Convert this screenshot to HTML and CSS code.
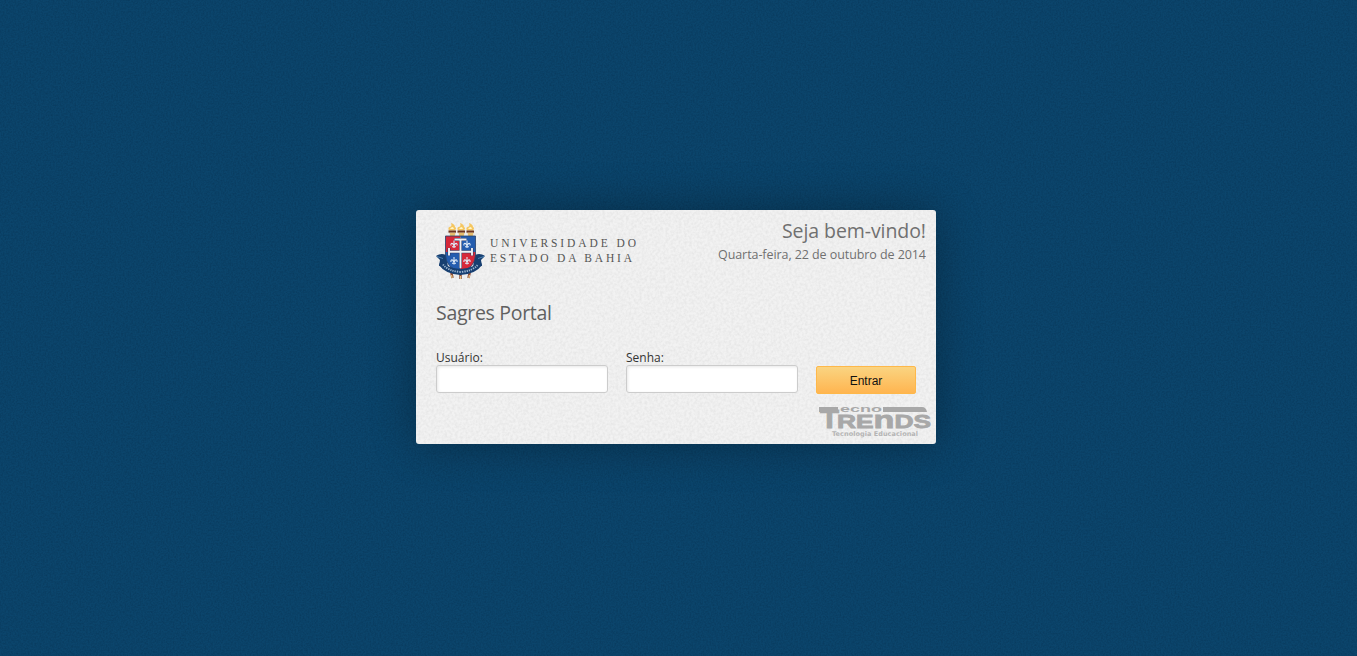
FILE: index.html
```html
<!DOCTYPE html>
<html lang="pt-BR">
<head>
<meta charset="utf-8">
<title>Sagres Portal</title>
<link rel="stylesheet" href="styles.css">
</head>
<body>
<svg class="texture" aria-hidden="true">
  <filter id="grain" x="0" y="0" width="100%" height="100%" color-interpolation-filters="sRGB">
    <feTurbulence type="fractalNoise" baseFrequency="0.6" numOctaves="2" seed="4"/>
    <feColorMatrix values="0 0 0 0 0  0 0 0 0 0.1  0 0 0 0 0.2  0.4 0 0 0 -0.13"/>
  </filter>
  <rect width="100%" height="100%" filter="url(#grain)"/>
</svg>
<main class="card">
  <svg class="texture card-texture" aria-hidden="true">
    <filter id="paper" x="0" y="0" width="100%" height="100%" color-interpolation-filters="sRGB">
      <feTurbulence type="fractalNoise" baseFrequency="0.38" numOctaves="2" seed="9"/>
      <feColorMatrix values="0 0 0 0 0.8  0 0 0 0 0.8  0 0 0 0 0.8  0.6 0 0 0 -0.2"/>
    </filter>
    <rect width="100%" height="100%" filter="url(#paper)"/>
  </svg>
  <header class="top">
    <div class="brand">
      <svg class="crest" viewBox="0 0 50 58" width="50" height="58">
        <!-- torches -->
        <g id="torch">
          <path d="M13 8.500Q11 5 15 4.500Q16 3 15 1Q19 2.500 19 5Q21 6 19 8.500Z" fill="#f5c660"/>
          <path d="M14 7Q15 5 17 5L18 7Z" fill="#fff6c8"/>
          <path d="M12.500 8.500h7.500v2.200h-7.500z" fill="#6f3520"/>
          <path d="M13.500 10.700h6l-1 4.500h-4z" fill="#e6bd6c"/>
        </g>
        <use href="#torch" x="9"/><use href="#torch" x="18"/>
        <!-- rods and ribbon ends behind the shield -->
        <path d="M15 49l1.500 7M24.500 50v7M34 49l-1.500 7" stroke="#8b4a35" stroke-width="2.500"/>
        <path d="M15.500 53l.7 3M24.500 54v3M33.500 53l-.7 3" stroke="#e9c986" stroke-width="1.200"/>
        <path d="M0 34Q5 30.500 10 33L12 45L3 44L4 38Z" fill="#173f70"/>
        <path d="M49 34Q44 30.500 39 33L37 45L46 44L45 38Z" fill="#173f70"/>
        <path d="M1 34.500l6 2M48 34.500l-6 2" stroke="#4f83b4"/>
        <!-- quartered shield -->
        <path d="M9.500 14H24.500V30H9.500Z" fill="#d6283a"/>
        <path d="M24.500 14H39.500V30H24.500Z" fill="#245daf"/>
        <path d="M9.500 30H24.500V50Q10 46 9.500 33Z" fill="#245daf"/>
        <path d="M24.500 30H39.500V33Q39 46 24.500 50Z" fill="#d6283a"/>
        <path d="M9.500 14H39.500V33Q39 46 24.500 50Q10 46 9.500 33Z" fill="none" stroke="#24416c" stroke-width=".8"/>
        <path d="M24.500 17V46M13 29.700H36M18.500 17.500H30.500M13 26V33.500M36 26V33.500" fill="none" stroke="#303b60" stroke-width="3"/>
        <path d="M24.500 17V46M13 29.700H36M18.500 17.500H30.500M13 26V33.500M36 26V33.500" fill="none" stroke="#eff1f5" stroke-width="1.900"/>
        <g fill="none" stroke="#dfebf8" stroke-width="1.100">
          <path id="lis" d="M18 18.500V26M15 23.500Q14.500 21 16.500 21.500L18 23.700L19.500 21.500Q21.500 21 21 23.500M16 24.700H20"/>
          <use href="#lis" x="13"/><use href="#lis" y="16.500"/><use href="#lis" x="13" y="16.500"/>
        </g>
        <!-- motto ribbon -->
        <path d="M5 38Q9 46 24.500 47Q40 46 44 38L46 43Q40 52 24.500 53Q9 52 3 43Z" fill="#173f71"/>
        <path d="M7 42.500Q12 49 24.500 50Q37 49 42 42.500" fill="none" stroke="#9fb7d0" stroke-width="1.900" stroke-dasharray="1.300 1"/>
      </svg>
      <svg class="brand-name" width="150" height="32" viewBox="0 0 150 32">
        <text x="1" y="10" textLength="146">UNIVERSIDADE DO</text>
        <text x="1" y="25" textLength="142">ESTADO DA BAHIA</text>
      </svg>
    </div>
    <div class="welcome">
      <svg width="220" height="50" viewBox="0 0 220 50">
        <text class="hello" x="76" y="21" textLength="144">Seja bem-vindo!</text>
        <text class="date" x="12" y="42" textLength="208">Quarta-feira, 22 de outubro de 2014</text>
      </svg>
    </div>
  </header>
  <h1 class="title">Sagres Portal</h1>
  <form class="login">
    <label class="field"><span class="label">Usuário:</span><input class="input" type="text"></label>
    <label class="field"><span class="label">Senha:</span><input class="input" type="password"></label>
    <button class="submit" type="button">Entrar</button>
  </form>
  <footer class="foot">
    <svg class="vendor" width="114" height="34" viewBox="0 0 114 34">
      <path d="M1 3H20V8H1ZM65 3H104Q108 3 109 8H65Z"/>
      <text class="mark" x="2" y="23.500" font-size="26" textLength="19" lengthAdjust="spacingAndGlyphs">T</text>
      <text class="mark" x="19" y="23.500" font-size="18.500" textLength="94" lengthAdjust="spacingAndGlyphs">RE<tspan font-size="24">n</tspan>DS</text>
      <text class="tecno" x="22" y="8" font-size="9.500" textLength="42" lengthAdjust="spacingAndGlyphs">ecno</text>
      <text class="tag" x="14" y="32" textLength="86">Tecnologia Educacional</text>
    </svg>
  </footer>
</main>
</body>
</html>
```
FILE: styles.css
```css
* { box-sizing: border-box; }
body {
  margin: 0;
  height: 656px;
  padding: 210px 0 0 416px;
  position: relative;
  overflow: hidden;
  background: #0b456c;
  font-family: "Noto Sans", "Open Sans", sans-serif;
}
.texture { position: absolute; top: 0; left: 0; width: 100%; height: 100%; }
.card {
  position: relative;
  width: 520px;
  height: 234px;
  padding: 10px 10px 0 20px;
  background: #f2f2f2;
  border-radius: 3px;
  box-shadow: 0 0 46px rgba(0, 0, 0, .32);
}
.card-texture { border-radius: 3px; }
.top, .title, .login, .foot { position: relative; }
.top { display: flex; justify-content: space-between; height: 77px; }
.brand { display: flex; gap: 4px; padding-top: 2px; }
.crest { display: block; }
.brand-name { margin: 15px 0 0 -1px; }
.brand-name text { font: 11.5px "Liberation Serif", serif; fill: #555; }
.hello, .date { font-family: "Open Sans", sans-serif; fill: #707070; }
.welcome { margin-top: -3px; }
.hello { font-size: 19.5px; }
.date { font-size: 12.5px; }
.title {
  margin: 0;
  height: 53px;
  font: 400 19.5px/32px "Open Sans", sans-serif;
  letter-spacing: -.3px;
  color: #606060;
}
.login { display: flex; align-items: flex-end; gap: 18px; height: 44px; }
.field { display: block; width: 172px; height: 44px; }
.label { display: block; height: 15px; font: 12px/15px "Open Sans", sans-serif; color: #333; }
.input {
  display: block;
  width: 172px;
  height: 28px;
  border: 1px solid #ccc;
  border-radius: 3px;
  background: #fff;
  box-shadow: inset 1px 1px 3px #e8e8e8;
}
.submit {
  width: 100px;
  height: 28px;
  padding: 1px 0 0;
  border: 1px solid #feb84a;
  border-radius: 2px;
  background: linear-gradient(#fad481, #ffb550);
  font: 12px "Liberation Sans", Arial, sans-serif;
  color: #111;
}
.foot { display: flex; justify-content: flex-end; padding-top: 10px; margin-right: -6px; }
.vendor { display: block; fill: #a8a8a8; }
.mark { font-family: "Liberation Sans", sans-serif; font-weight: 700; stroke: #a8a8a8; stroke-width: .8px; }
.tecno { font-family: "Liberation Sans", sans-serif; font-weight: 700; }
.tag { font: 700 6.5px "DejaVu Sans", sans-serif; fill: #b5b5b5; }
```
